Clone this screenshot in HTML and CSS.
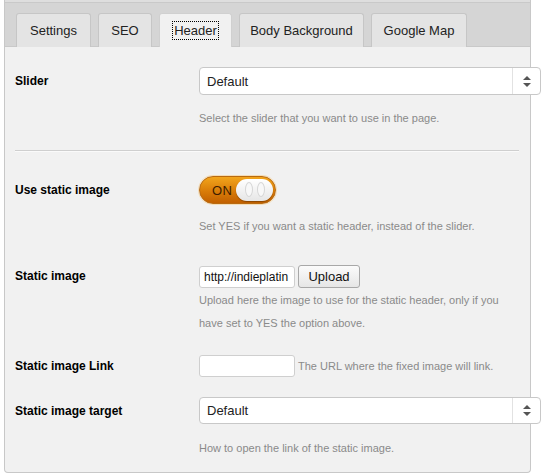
FILE: index.html
```html
<!DOCTYPE html>
<html>
<head>
<meta charset="utf-8">
<link rel="stylesheet" href="styles.css">
</head>
<body>
<div class="panel">
  <div class="tabbar">
    <div class="tab t1">Settings</div>
    <div class="tab t2">SEO</div>
    <div class="tab t3 active"><span class="focus">Header</span></div>
    <div class="tab t4">Body Background</div>
    <div class="tab t5">Google Map</div>
  </div>
  <div class="content">
    <div class="row r1">
      <div class="label h28">Slider</div>
      <div class="field">
        <div class="select"><span class="sel-text">Default</span><span class="sel-arrow"><svg width="8" height="11" viewBox="0 0 8 11"><path d="M4 0 L8 4 L0 4 Z M0 7 L8 7 L4 11 Z" fill="#555"/></svg></span></div>
        <div class="desc d1">Select the slider that you want to use in the page.</div>
      </div>
    </div>
    <div class="sep"></div>
    <div class="row r2">
      <div class="label h28">Use static image</div>
      <div class="field">
        <div class="toggle"><span class="on">ON</span><span class="knob"><i></i><i></i></span></div>
        <div class="desc d2">Set YES if you want a static header, instead of the slider.</div>
      </div>
    </div>
    <div class="row r3">
      <div class="label h22">Static image</div>
      <div class="field">
        <div class="inline">
          <div class="input">http://indieplatin</div>
          <div class="button">Upload</div>
        </div>
        <div class="desc d3">Upload here the image to use for the static header, only if you have set to YES the option above.</div>
      </div>
    </div>
    <div class="row r4">
      <div class="label h22">Static image Link</div>
      <div class="field">
        <div class="inline">
          <div class="input"></div>
          <span class="desc inline-desc">The URL where the fixed image will link.</span>
        </div>
      </div>
    </div>
    <div class="row r5">
      <div class="label h27">Static image target</div>
      <div class="field">
        <div class="select s27"><span class="sel-text">Default</span><span class="sel-arrow"><svg width="8" height="11" viewBox="0 0 8 11"><path d="M4 0 L8 4 L0 4 Z M0 7 L8 7 L4 11 Z" fill="#555"/></svg></span></div>
        <div class="desc d5">How to open the link of the static image.</div>
      </div>
    </div>
  </div>
</div>
</body>
</html>
```

FILE: styles.css
```css
* { box-sizing: border-box; }
html, body { margin: 0; padding: 0; background: #fff; }
body { font-family: "Liberation Sans", Arial, sans-serif; color: #000; }

.panel {
  margin-left: 4px;
  width: 527px;
  height: 473px;
  border: 1px solid #c8c8c8;
  border-top: none;
  border-radius: 0 0 4px 4px;
  background: #f1f1f1;
}

.tabbar {
  height: 47px;
  background: #d5d5d5;
  border-top: 2px solid #dedede;
  box-shadow: inset 0 1px 0 #c9c9c9;
  border-bottom: 1px solid #c9c9c9;
  display: flex;
  align-items: flex-end;
  gap: 7px;
  padding-left: 11px;
}

.tab {
  height: 34px;
  margin-bottom: -1px;
  background: #e4e4e4;
  border: 1px solid #c6c6c6;
  border-bottom: none;
  border-radius: 3px 3px 0 0;
  font-size: 13px;
  color: #222;
  display: flex;
  align-items: center;
  justify-content: center;
  white-space: nowrap;
}
.t1 { width: 75px; }
.t2 { width: 54px; }
.t3 { width: 73px; }
.t4 { width: 125px; }
.t5 { width: 96px; }
.tab.active { background: #f1f1f1; border-color: #d0d0d0; }
.focus { border: 1px dotted #000; padding: 1px 1px; line-height: 15px; }

.content { padding: 0 11px 0 10px; }

.row { display: flex; }
.label {
  width: 184px;
  flex: none;
  font-size: 12px;
  font-weight: bold;
  display: flex;
  align-items: center;
}
.h28 { height: 28px; }
.h22 { height: 22px; }
.h27 { height: 27px; }
.field { flex: 1; min-width: 0; }

.r1 { padding-top: 20px; }
.r2 { padding-top: 24px; }
.r3 { padding-top: 27px; }
.r4 { padding-top: 20px; }
.r5 { padding-top: 20px; }

.sep { margin-top: 20px; height: 2px; border-top: 1px solid #cfcfcf; border-bottom: 1px solid #fafafa; }

.desc { font-size: 11px; color: #8a8a8a; line-height: 23px; }
.d1 { margin-top: 12px; }
.d2 { margin-top: 11px; }
.d3 { margin-top: 1px; }
.d5 { margin-top: 13px; }

.select {
  width: 342px;
  height: 28px;
  background: #fff;
  border: 1px solid #c8c8c8;
  border-radius: 4px;
  display: flex;
  align-items: stretch;
}
.select.s27 { height: 27px; }
.sel-text { flex: 1; padding-left: 7px; font-size: 13px; color: #222; display: flex; align-items: center; }
.sel-arrow { width: 28px; border-left: 1px solid #e2e2e2; display: flex; align-items: center; justify-content: center; }

.toggle {
  width: 77px;
  height: 28px;
  border-radius: 14px;
  background: linear-gradient(#f2a51c, #d97c08 55%, #c26000);
  border: 1px solid #b96a10;
  box-shadow: 0 0 0 1px #f4ddb8;
  display: flex;
  align-items: center;
  padding: 0 2px 0 12px;
}
.on { font-size: 13px; color: #3e1c00; letter-spacing: 0.5px; flex: 1; padding-top: 1px; }
.knob {
  width: 37px;
  height: 22px;
  border-radius: 11px;
  background: linear-gradient(#ffffff, #e6e6e6);
  box-shadow: 0 1px 1px rgba(80, 40, 0, 0.5);
  display: flex;
  justify-content: center;
  gap: 4px;
  padding-top: 3px;
}
.knob i { display: block; width: 8px; height: 15px; border-radius: 50%; border: 1px solid #d6d6d6; background: #f8f8f8; }

.inline { display: flex; align-items: center; gap: 3px; }
.input {
  width: 96px;
  height: 22px;
  background: #fff;
  border: 1px solid #cfcfcf;
  border-radius: 3px;
  font-size: 12px;
  color: #111;
  padding-left: 4px;
  line-height: 20px;
  white-space: nowrap;
  overflow: hidden;
}
.button {
  width: 62px;
  height: 23px;
  background: linear-gradient(#fbfbfb, #e6e6e6);
  border: 1px solid #a8a8a8;
  border-radius: 3px;
  font-size: 13px;
  color: #111;
  display: flex;
  align-items: center;
  justify-content: center;
}
.inline-desc { line-height: 22px; }
```
